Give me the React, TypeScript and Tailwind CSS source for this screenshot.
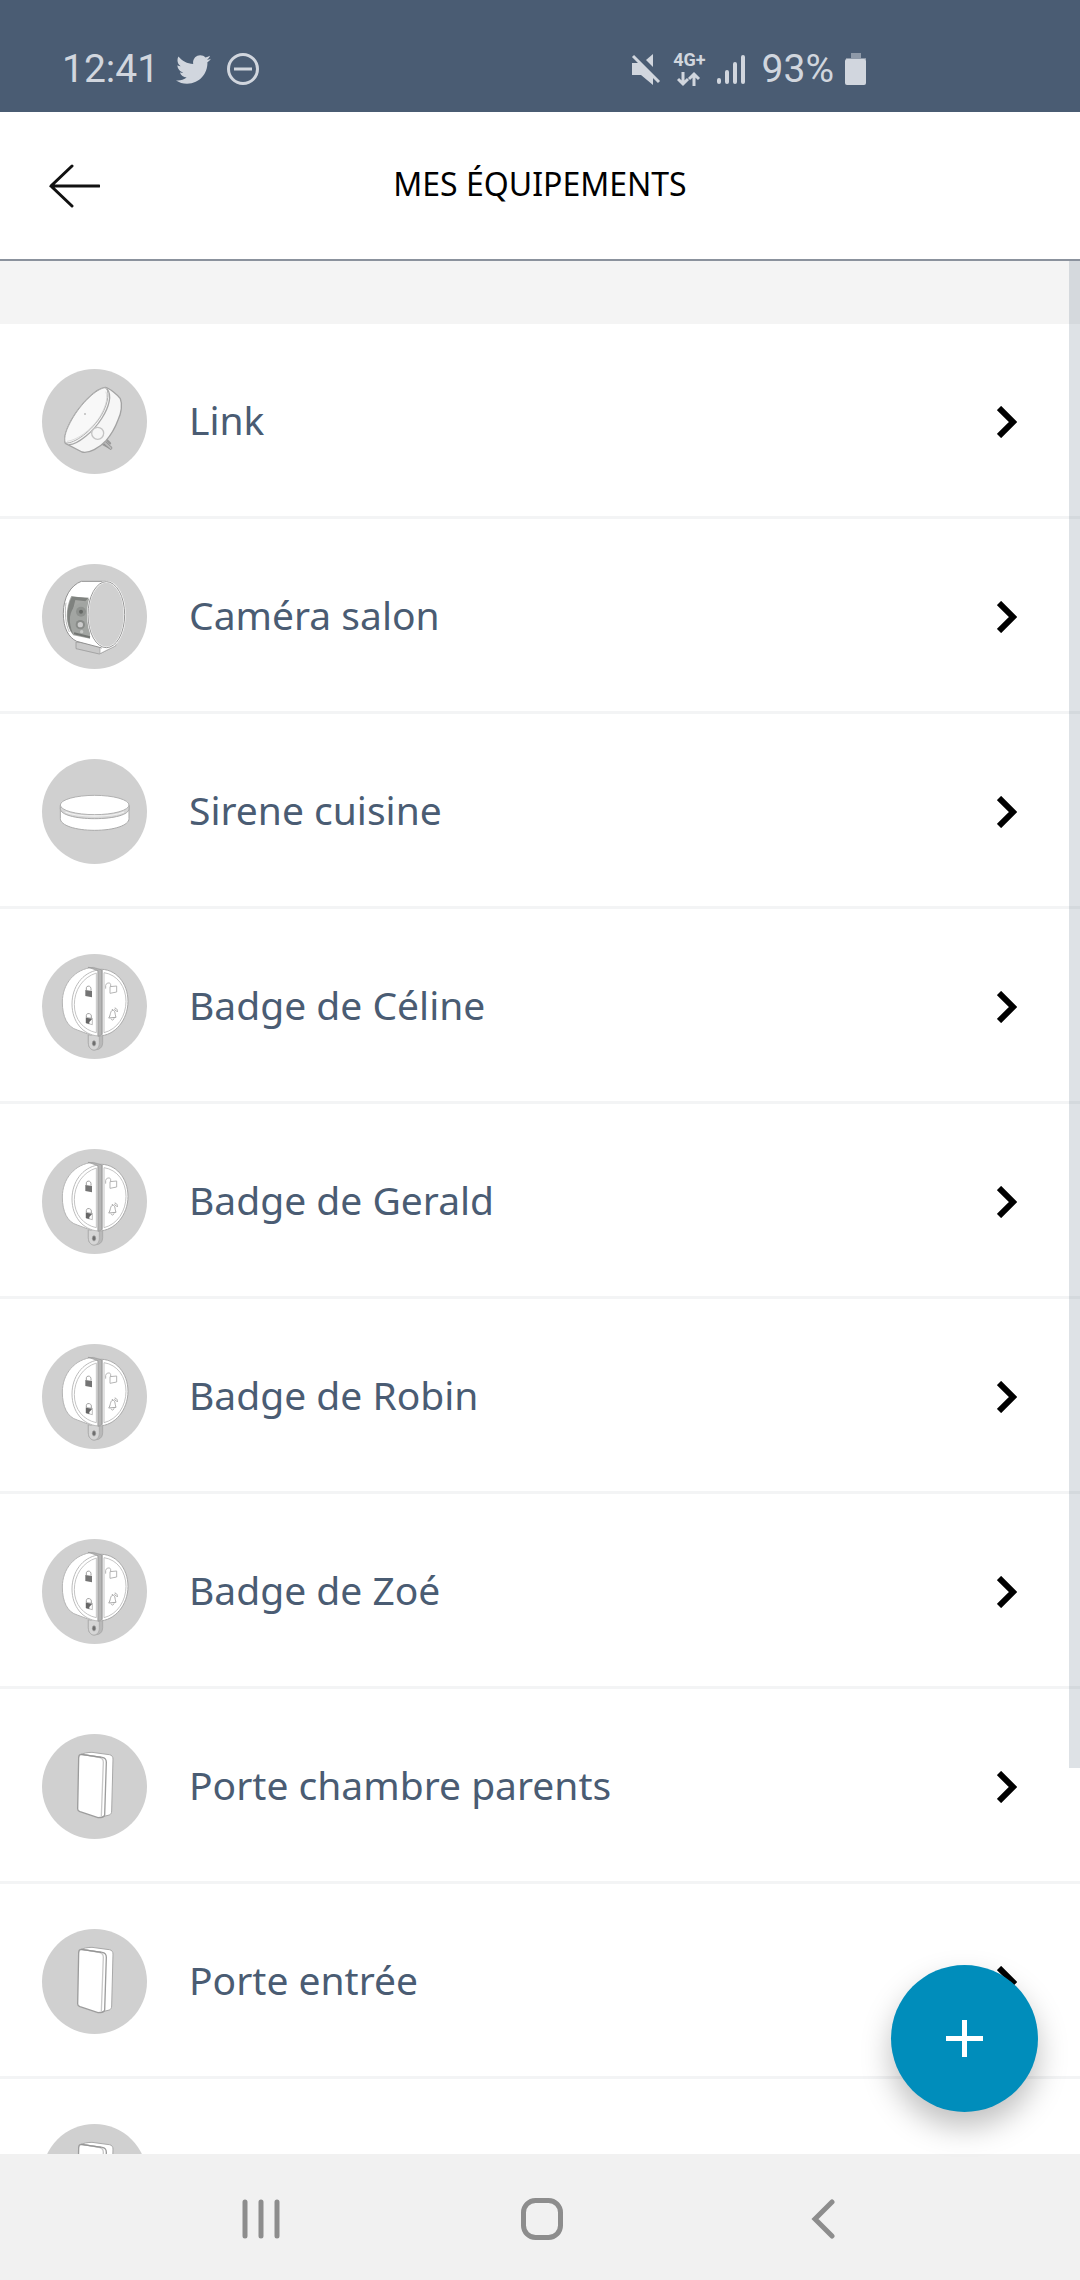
import type { ReactNode } from "react";
import { FaTwitter } from "react-icons/fa";

type Kind = "link" | "camera" | "siren" | "badge" | "door";

const devices: { name?: string; kind: Kind }[] = [
  { name: "Link", kind: "link" },
  { name: "Caméra salon", kind: "camera" },
  { name: "Sirene cuisine", kind: "siren" },
  { name: "Badge de Céline", kind: "badge" },
  { name: "Badge de Gerald", kind: "badge" },
  { name: "Badge de Robin", kind: "badge" },
  { name: "Badge de Zoé", kind: "badge" },
  { name: "Porte chambre parents", kind: "door" },
  { name: "Porte entrée", kind: "door" },
  { kind: "door" },
];

function LinkDrawing() {
  return (
    <svg viewBox="36 57 315 315" className="size-full" fill="none" strokeLinecap="round" strokeLinejoin="round">
      <g stroke="#9a9a9a" strokeWidth="7">
        <path d="M228 268l12 12M218 282l18 10" />
        <path d="M222 276l20 18" stroke="#8c8c8c" strokeWidth="10" />
        <path d="M222 276l20 18" stroke="#b9b9b9" strokeWidth="6" />
      </g>
      <path
        d="M226 112C238 114 262 134 271 146C278 162 274 190 264 210C256 232 240 258 228 272C210 292 176 312 156 306L106 280C100 266 108 240 124 210C148 168 196 114 226 112Z"
        fill="#f6f6f6"
        stroke="#a3a3a3"
        strokeWidth="4"
      />
      <path
        d="M226 113C240 118 236 158 214 196C186 242 134 282 106 279C100 262 110 236 126 208C152 162 200 114 226 113Z"
        fill="#f8f8f8"
        stroke="#adadad"
        strokeWidth="3"
      />
      <path d="M232 118C246 134 238 170 216 204C190 246 142 284 118 284" stroke="#a8a8a8" strokeWidth="4" />
      <path d="M228 126C236 146 224 178 206 206C180 242 142 270 112 274" stroke="#cfcfcf" strokeWidth="2" />
      <circle cx="203" cy="250" r="18" stroke="#c4c4c4" strokeWidth="4" />
      <circle cx="165" cy="192" r="3" fill="#bdbdbd" />
    </svg>
  );
}

function CameraDrawing() {
  return (
    <svg viewBox="36 42 315 315" className="size-full" fill="none" strokeLinejoin="round">
      <path d="M138 276L138 296L208 312L257 287L257 268L210 284Z" fill="#c9c9c9" stroke="#8f8f8f" strokeWidth="2" />
      <path d="M210 292L257 270L257 287L210 311Z" fill="#fff" stroke="#9a9a9a" strokeWidth="2" />
      <path
        d="M232 94L154 94C122 106 100 142 100 190C100 236 116 262 140 274L216 294Z"
        fill="#fff"
        stroke="#929292"
        strokeWidth="3"
      />
      <path d="M124 138L180 146L180 266L130 256C104 226 106 172 124 138Z" fill="#a6a8a5" />
      <path d="M126 140L176 143L166 154L136 150L130 174L124 236L130 254C106 226 108 172 126 140Z" fill="#7f827f" />
      <path d="M120 200C126 166 146 154 176 156L176 262L132 250C122 236 118 220 120 200Z" fill="#a2a5a2" />
      <path d="M132 250L180 262" stroke="#737673" strokeWidth="6" />
      <circle cx="153" cy="185" r="15" fill="#8e918e" />
      <circle cx="153" cy="185" r="6" fill="#656865" />
      <circle cx="151" cy="224" r="14" fill="#888b88" />
      <circle cx="151" cy="224" r="8" fill="#cdcdcd" />
      <circle cx="155" cy="245" r="5" fill="#c6c8c6" />
      <path d="M108 158C104 186 106 222 118 246" stroke="#bcbcbc" strokeWidth="3" />
      <ellipse cx="229" cy="194" rx="55" ry="99" fill="#d0d0d0" stroke="#fff" strokeWidth="6" />
      <ellipse cx="229" cy="194" rx="55" ry="99" stroke="#979797" strokeWidth="3" />
    </svg>
  );
}

function SirenDrawing() {
  return (
    <svg viewBox="36 57 315 315" className="size-full" fill="none">
      <path
        d="M91 196V236C91 256 136 271 194 271S297 256 297 236V196Z"
        fill="#fff"
        stroke="#a9a9a9"
        strokeWidth="3"
      />
      <path d="M91 196V206C91 224 136 236 194 236S297 224 297 206V196Z" fill="#d7d7d7" stroke="#a9a9a9" strokeWidth="3" />
      <ellipse cx="194" cy="195" rx="103" ry="29" fill="#fff" stroke="#b0b0b0" strokeWidth="3" />
      <path d="M106 216C140 232 248 232 282 216" stroke="#f2f2f2" strokeWidth="4" />
    </svg>
  );
}

function BadgeDrawing() {
  return (
    <svg viewBox="36 42 315 315" className="size-full" fill="none" strokeLinejoin="round">
      <path d="M175 285V308C175 323 184 330 193 330L205 328C213 325 218 318 218 308V280Z" fill="#b9b9b9" stroke="#a0a0a0" strokeWidth="2" />
      <path d="M175 285V308C175 322 183 330 192 330S208 322 208 308V284Z" fill="#d6d6d6" stroke="#a6a6a6" strokeWidth="2" />
      <ellipse cx="192" cy="310" rx="5" ry="8" fill="#6e6e6e" stroke="#979797" strokeWidth="2" />
      <path
        d="M190 82C134 86 97 132 97 186C97 230 112 262 142 270L184 286L204 90Z"
        fill="#fff"
        stroke="#b4b4b4"
        strokeWidth="3"
      />
      <path d="M205 88C258 84 294 130 294 184S256 288 205 288Z" fill="#fff" stroke="#a9a9a9" strokeWidth="3" />
      <path d="M204 90C156 98 126 142 126 192C126 244 158 284 204 288Z" fill="#fff" stroke="#bbb" strokeWidth="3" />
      <path d="M199 99C158 112 133 150 133 194C133 238 160 270 199 278Z" stroke="#c4c4c4" strokeWidth="3" />
      <path d="M222 98C262 104 288 140 288 184C288 228 262 268 222 278Z" stroke="#c4c4c4" strokeWidth="3" />
      <path d="M174 82L196 84L216 90V284L204 289V92Z" fill="#b5b5b5" stroke="#999" strokeWidth="2" />
      <path d="M216 90V284" stroke="#9c9c9c" strokeWidth="3" />
      <path d="M169 150V144C169 136 183 136 183 146V152" stroke="#a2a2a2" strokeWidth="3" />
      <path d="M166 150L186 153V172L166 168Z" fill="#747474" />
      <path d="M169 231V226C169 218 184 219 184 228V234" stroke="#a2a2a2" strokeWidth="3" />
      <path d="M168 232L187 235V254L168 249Z" fill="#fff" stroke="#9d9d9d" strokeWidth="2" />
      <path d="M168 233L187 236L178 246V252L168 249Z" fill="#666" />
      <path d="M240 140L260 138V156L240 160Z M242 140V134C242 126 228 128 227 136L227 146" stroke="#b5b5b5" strokeWidth="3" />
      <path d="M236 234C242 228 240 212 248 211S254 220 258 232Z M243 236C245 242 251 241 252 235M247 211V207M253 208L260 214M254 204C260 204 263 210 262 216" stroke="#a9a9a9" strokeWidth="3" />
    </svg>
  );
}

function DoorDrawing() {
  return (
    <svg viewBox="36 57 315 315" className="size-full" fill="none" strokeLinejoin="round">
      <path
        d="M150 120C160 114 174 112 186 112L238 119C246 120 249 126 249 132L245 288C245 294 242 298 238 300L206 308Z"
        fill="#fff"
        stroke="#a8a8a8"
        strokeWidth="3"
      />
      <path
        d="M154 118L216 127C224 128 229 134 229 142L224 300C223 304 214 308 204 308L150 290C145 288 143 286 143 282L146 128C146 121 149 118 154 118Z"
        fill="#fff"
        stroke="#9c9c9c"
        strokeWidth="4"
      />
      <path d="M158 118L210 128C217 130 220 135 220 142L214 304" stroke="#c9c9c9" strokeWidth="4" />
      <path d="M154 118L214 127" stroke="#949494" strokeWidth="4" />
    </svg>
  );
}

const drawings: Record<Kind, () => ReactNode> = {
  link: LinkDrawing,
  camera: CameraDrawing,
  siren: SirenDrawing,
  badge: BadgeDrawing,
  door: DoorDrawing,
};

function DeviceRow({ name, kind }: { name?: string; kind: Kind }) {
  const Drawing = drawings[kind];
  return (
    <li>
      <button
        type="button"
        aria-label={name ?? "Équipement"}
        className="flex h-[195px] w-full items-center gap-[42px] bg-white pr-[63px] pl-[42px] text-left shadow-[inset_0_-3px_0_#f3f4f5]"
      >
        <span className="size-[105px] shrink-0 overflow-hidden rounded-full bg-[#d0d0d0]">
          <Drawing />
        </span>
        <span className="flex-1 pb-1 text-[39px] leading-[54px] text-[#4a5c73]">{name}</span>
        <svg viewBox="0 0 20 32" className="h-8 w-5 shrink-0" fill="none" stroke="#000" strokeWidth="6">
          <path d="M2 2L16 16L2 30" />
        </svg>
      </button>
    </li>
  );
}

function StatusBar() {
  return (
    <div className="flex h-28 shrink-0 items-center justify-between bg-[#4a5c73] pt-[26px] pr-[213px] pl-[62px] font-['Roboto',sans-serif] text-[39px] leading-[48px] text-[#d1d6de]">
      <div className="flex items-center">
        <span>12:41</span>
        <FaTwitter className="ml-[17px] size-[35px]" />
        <svg viewBox="0 0 32 32" className="ml-4 size-8" fill="none" stroke="currentColor" strokeWidth="3">
          <circle cx="16" cy="16" r="14.5" />
          <path d="M7 16H25" />
        </svg>
      </div>
      <div className="flex items-center">
        <svg viewBox="0 0 30 32" className="h-8 w-[30px]">
          <path d="M1 10H8L22 24V32L10 22H1Z" fill="currentColor" />
          <path d="M22 1V14L15 7Z" fill="currentColor" />
          <path d="M2 3L28 29" stroke="currentColor" strokeWidth="3" />
        </svg>
        <div className="ml-3 flex flex-col items-center gap-[3px]">
          <span className="text-[18px] leading-4 font-bold">4G+</span>
          <svg viewBox="0 0 24 16" className="h-4 w-6" fill="none" stroke="currentColor" strokeWidth="3">
            <path d="M6 1V13M1 8L6 13L11 8" />
            <path d="M17 15V3M12 8L17 3L22 8" />
          </svg>
        </div>
        <svg viewBox="0 0 28 32" className="ml-[11px] h-8 w-7" stroke="currentColor" strokeWidth="4" strokeLinecap="round">
          <path d="M2 27V29M10 19V29M18 11V29M26 4V29" />
        </svg>
        <span className="ml-[17px]">93%</span>
        <svg viewBox="0 0 22 34" className="ml-[11px] h-[34px] w-[22px]" fill="currentColor">
          <path d="M6 1H16V6H21V8H1V6H6Z" opacity="0.5" />
          <rect x="0" y="7" width="21" height="26" rx="2" />
        </svg>
      </div>
    </div>
  );
}

export default function App() {
  return (
    <div className="flex h-screen flex-col overflow-hidden bg-white font-['Noto_Sans',sans-serif]">
      <StatusBar />

      <header className="grid h-[149px] shrink-0 grid-cols-[1fr_auto_1fr] items-center border-b-2 border-[#8b929d] px-12">
        <button type="button" aria-label="Retour" className="justify-self-start">
          <svg viewBox="0 0 52 44" className="h-11 w-[52px]" fill="none" stroke="#111" strokeWidth="3" strokeLinecap="round">
            <path d="M24 2L3 22L24 42M3 22H51" />
          </svg>
        </button>
        <h1 className="pb-[3px] text-[32px] leading-[44px] text-black">MES ÉQUIPEMENTS</h1>
      </header>

      <div className="relative min-h-0 flex-1">
        <main className="h-full overflow-y-auto bg-[#f4f4f4] pt-[63px] [scrollbar-width:none]">
          <ul>
            {devices.map((device, index) => (
              <DeviceRow key={index} name={device.name} kind={device.kind} />
            ))}
          </ul>
        </main>
        <div className="pointer-events-none absolute top-0 right-0 h-[79.6%] w-[11px] bg-[#4a5c73]/18" />
        <button
          type="button"
          aria-label="Ajouter un équipement"
          className="absolute right-[42px] bottom-[42px] flex size-[147px] items-center justify-center rounded-full bg-[#008dbb] shadow-[0_15px_30px_rgba(0,0,0,0.25)]"
        >
          <svg viewBox="0 0 37 37" className="size-[37px]" stroke="#fff" strokeWidth="5">
            <path d="M18.5 0V37M0 18.5H37" />
          </svg>
        </button>
      </div>

      <nav className="grid h-[126px] shrink-0 grid-cols-3 items-center justify-items-center bg-[#f1f1f1] pt-1 pr-[117px] pl-[121px] text-[#8d8d8d]">
        <button type="button" aria-label="Applications récentes">
          <svg viewBox="0 0 38 40" className="h-10 w-[38px]" stroke="currentColor" strokeWidth="5" strokeLinecap="round">
            <path d="M3 3V37M19 3V37M35 3V37" />
          </svg>
        </button>
        <button type="button" aria-label="Accueil">
          <svg viewBox="0 0 42 42" className="size-[42px]" fill="none" stroke="currentColor" strokeWidth="5">
            <rect x="2.5" y="2.5" width="37" height="37" rx="12" />
          </svg>
        </button>
        <button type="button" aria-label="Précédent">
          <svg viewBox="0 0 24 40" className="h-10 w-6" fill="none" stroke="currentColor" strokeWidth="5" strokeLinecap="round">
            <path d="M21 3L4 20L21 37" />
          </svg>
        </button>
      </nav>
    </div>
  );
}
